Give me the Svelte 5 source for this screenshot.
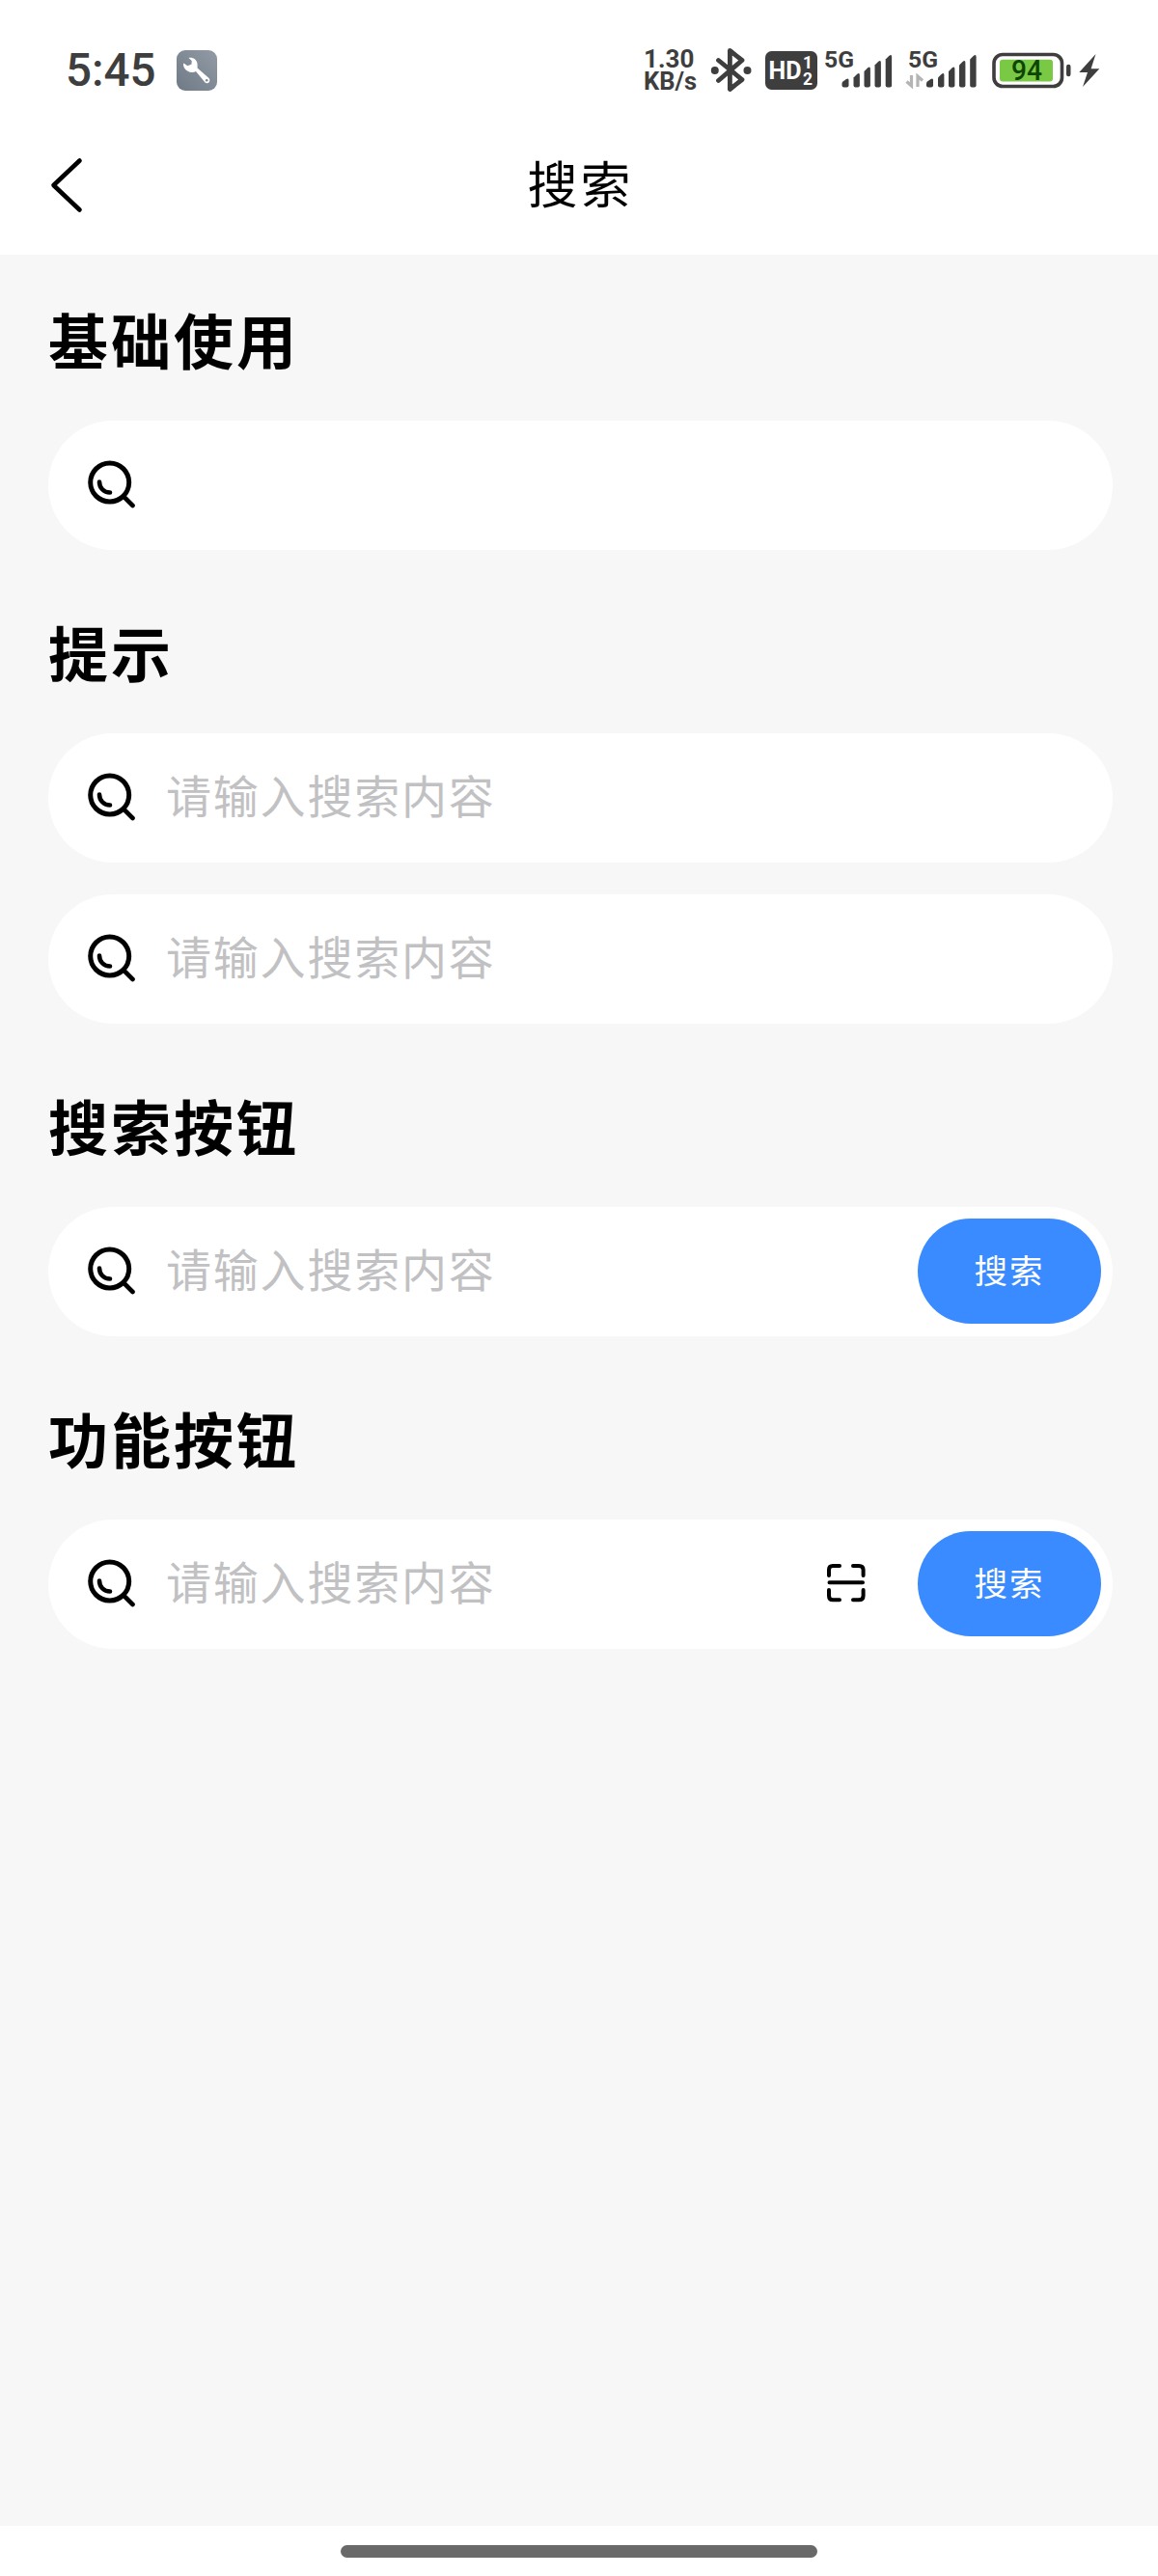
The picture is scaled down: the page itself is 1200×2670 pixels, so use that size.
<script lang="ts">
  interface SearchItem {
    value: string;
    placeholder?: string;
    button?: string;
    scan?: boolean;
  }

  interface Section {
    title: string;
    items: SearchItem[];
  }

  const hint = '请输入搜索内容';

  let sections = $state<Section[]>([
    { title: '基础使用', items: [{ value: '' }] },
    {
      title: '提示',
      items: [
        { value: '', placeholder: hint },
        { value: '', placeholder: hint },
      ],
    },
    { title: '搜索按钮', items: [{ value: '', placeholder: hint, button: '搜索' }] },
    { title: '功能按钮', items: [{ value: '', placeholder: hint, button: '搜索', scan: true }] },
  ]);
</script>

{#snippet signalBars()}
  <path d="M0 46.5V44.5Q0 43.5 1 42.5L4.5 40Q7 38.5 7 41V46.5Q7 48.5 5 48.5H2Q0 48.5 0 46.5Z" />
  <path d="M12 46.5V38.5L15.5 35Q18.4 32.5 18.4 36V46.5Q18.4 48.5 16.4 48.5H14Q12 48.5 12 46.5Z" />
  <path d="M23 46.5V32L26.5 28.5Q29.4 26 29.4 29.5V46.5Q29.4 48.5 27.4 48.5H25Q23 48.5 23 46.5Z" />
  <path d="M34 46.5V25.5L37.5 22Q40.4 19.5 40.4 23V46.5Q40.4 48.5 38.4 48.5H36Q34 48.5 34 46.5Z" />
  <path d="M45.2 46.5V19.5L48.7 16Q51.6 13.5 51.6 17V46.5Q51.6 48.5 49.6 48.5H47.2Q45.2 48.5 45.2 46.5Z" />
{/snippet}

<div class="page">
  <div class="status-bar">
    <span class="time">5:45</span>
    <svg class="tool" width="42" height="42" viewBox="0 0 42 42" aria-hidden="true">
      <defs>
        <linearGradient id="tool-bg" x1="0" y1="1" x2="1" y2="0">
          <stop offset="0" stop-color="#6f7a86" />
          <stop offset="1" stop-color="#929ba5" />
        </linearGradient>
      </defs>
      <rect width="42" height="42" rx="9" fill="url(#tool-bg)" />
      <path
        d="M12.500 8C16.500 7 20.500 9.500 21.300 13C21.700 15 21.700 17 21.500 18.500L33.500 29C36 32 32.500 36 29.500 33.500L20 22C16 24 10.500 22.500 8.200 18.700C7 16.800 6.700 14.800 7.300 13.500L11.500 16.300L15.500 14.500L15.700 11Z"
        fill="#fff"
      />
      <circle cx="31.200" cy="31.300" r="1.300" fill="#7e8894" />
    </svg>

    <div class="speed"><span>1.30</span><span class="unit">KB/s</span></div>
    <svg class="bluetooth" width="44" height="60" viewBox="0 0 44 60" aria-hidden="true">
      <path
        d="M8.500 20.500L33 40.500L20.400 50.500V10.500L33 20.500L8.500 41.500"
        fill="none"
        stroke="#3e3e3e"
        stroke-width="4.800"
        stroke-linecap="round"
        stroke-linejoin="round"
      />
      <circle cx="4.800" cy="31" r="4" fill="#3e3e3e" />
      <circle cx="38.500" cy="31" r="4" fill="#3e3e3e" />
    </svg>
    <svg class="hd" width="54" height="60" viewBox="0 0 54 60">
      <rect y="11" width="54" height="40" rx="6.500" fill="#3e3e3e" />
      <g fill="#fff" font-weight="700">
        <text x="3.500" y="40" font-size="25" textLength="34" lengthAdjust="spacingAndGlyphs">HD</text>
        <text x="39" y="28.500" font-size="17.500">1</text>
        <text x="39" y="46" font-size="17.500">2</text>
      </g>
    </svg>
    <svg class="signal" width="71" height="60" viewBox="0 0 71 60" fill="#3e3e3e">
      <text x="0" y="28.300" font-size="24" font-weight="700" textLength="31" lengthAdjust="spacingAndGlyphs">5G</text>
      <g transform="translate(18.500 0)">{@render signalBars()}</g>
    </svg>
    <svg class="signal-data" width="75" height="60" viewBox="0 0 75 60" fill="#3e3e3e">
      <text x="3" y="28.300" font-size="24" font-weight="700" textLength="31" lengthAdjust="spacingAndGlyphs">5G</text>
      <path
        d="M6.500 36V47L1.500 42.500M13 48V37L18 41.500"
        fill="none"
        stroke="#b4b4b4"
        stroke-width="3.200"
      />
      <g transform="translate(22 0)">{@render signalBars()}</g>
    </svg>
    <svg class="battery" width="82" height="60" viewBox="0 0 82 60">
      <rect x="2" y="14.500" width="70.500" height="33" rx="9" fill="#fff" stroke="#3e3e3e" stroke-width="3.600" />
      <rect x="8" y="19.700" width="55" height="22.800" rx="3" fill="#79c944" />
      <rect x="77" y="24.700" width="4.500" height="12.500" rx="2.200" fill="#3e3e3e" />
      <text x="20" y="41.300" font-size="29" font-weight="500" fill="#0f4503" textLength="32" lengthAdjust="spacingAndGlyphs">94</text>
    </svg>
    <svg class="bolt" width="22" height="60" viewBox="0 0 22 60" aria-hidden="true">
      <path d="M17.500 14L0.300 33H9L4 48L21.300 29.300H12.600Z" fill="#3e3e3e" />
    </svg>
  </div>

  <header class="nav-bar">
    <button class="back" type="button" aria-label="返回">
      <svg width="34" height="58" viewBox="0 0 34 58">
        <path
          d="M30.500 3.500L3.500 29L30.500 54.500"
          fill="none"
          stroke="#000"
          stroke-width="4.600"
          stroke-linecap="round"
          stroke-linejoin="round"
        />
      </svg>
    </button>
    <h1>搜索</h1>
  </header>

  <main class="content">
    {#each sections as section (section.title)}
      <section>
        <h2>{section.title}</h2>
        <div class="search-list">
          {#each section.items as item, idx (idx)}
            <div class="search">
              <svg class="search-icon" width="50" height="50" viewBox="0 0 50 50" aria-hidden="true">
                <g fill="none" stroke="#000" stroke-linecap="round">
                  <circle cx="22.700" cy="23" r="20" stroke-width="5" />
                  <path d="M37.500 38L46.500 47" stroke-width="4.600" />
                  <path d="M12 22.500C12 28.500 16.500 33.500 23 33.500" stroke-width="4.600" />
                </g>
              </svg>
              <input type="text" placeholder={item.placeholder} aria-label={section.title} bind:value={item.value} />
              {#if item.scan}
                <button class="scan" type="button" aria-label="扫一扫">
                  <svg width="40" height="40" viewBox="0 0 40 40">
                    <path
                      d="M2 12V6Q2 2 6 2H13M27 2H33Q37.600 2 37.600 6V12M2 27V33Q2 37.300 6 37.300H13M27 37.300H33Q37.600 37.300 37.600 33V27M2.500 19.300H37"
                      fill="none"
                      stroke="#000"
                      stroke-width="4"
                      stroke-linecap="round"
                    />
                  </svg>
                </button>
              {/if}
              {#if item.button}
                <button class="submit" type="button">{item.button}</button>
              {/if}
            </div>
          {/each}
        </div>
      </section>
    {/each}
  </main>

  <div class="gesture-bar"><span></span></div>
</div>

<style>
  :global(body) {
    background: #fff;
  }

  .page {
    display: flex;
    flex-direction: column;
    width: 1200px;
    height: 2670px;
    overflow: hidden;
    background: #fff;
    color: #000;
    font-family: 'Noto Sans CJK SC', sans-serif;
  }

  .page svg {
    display: block;
    flex: none;
  }

  .status-bar {
    display: flex;
    align-items: center;
    box-sizing: border-box;
    height: 144px;
    padding: 0 60px 0 68px;
    color: #3e3e3e;
    font-family: Roboto, sans-serif;
  }

  .time {
    width: 115px;
    padding-top: 2px;
    font-size: 47.5px;
    font-weight: 500;
    line-height: 60px;
  }

  .tool {
    margin: 2px auto 0 0;
  }

  .speed {
    display: flex;
    flex-direction: column;
    width: 69px;
    padding-top: 2px;
    font-size: 26px;
    font-weight: 700;
    line-height: 23px;
    white-space: nowrap;
  }

  .unit {
    font-size: 25.5px;
  }

  .bluetooth {
    margin-right: 13px;
  }

  .hd {
    margin-right: 7px;
  }

  .signal {
    margin-right: 13px;
  }

  .signal-data {
    margin-right: 15px;
  }

  .battery {
    margin-right: 8px;
  }

  .nav-bar {
    display: grid;
    grid-template-columns: 1fr auto 1fr;
    align-items: center;
    height: 96px;
    padding-bottom: 24px;
  }

  .back {
    justify-self: start;
    padding: 0 52px;
    border: none;
    background: none;
  }

  h1 {
    margin: 0 -3px 0 0;
    padding-bottom: 7px;
    font-size: 52px;
    font-weight: 400;
    line-height: 70px;
    letter-spacing: 3px;
  }

  .content {
    display: flex;
    flex: 1;
    flex-direction: column;
    gap: 70px;
    padding: 52px 47px 0 50px;
    background: #f7f7f7;
  }

  h2 {
    margin: 0 0 50px;
    font-size: 62px;
    font-weight: 700;
    line-height: 70px;
    letter-spacing: 3px;
  }

  .search-list {
    display: flex;
    flex-direction: column;
    gap: 33px;
  }

  .search {
    display: flex;
    align-items: center;
    box-sizing: border-box;
    height: 134px;
    padding: 0 12px 2px 41px;
    border-radius: 68px;
    background: #fff;
  }

  .search-icon {
    margin-right: 31px;
  }

  input {
    flex: 1;
    min-width: 0;
    padding: 0 0 6px;
    border: none;
    outline: none;
    background: none;
    font: inherit;
    font-size: 47px;
    line-height: 68px;
    letter-spacing: 1.8px;
  }

  input::placeholder {
    color: #c1c1c3;
    opacity: 1;
  }

  .scan {
    margin-right: 54px;
    padding: 0;
    border: none;
    background: none;
  }

  .submit {
    width: 190px;
    height: 109px;
    padding: 0 0 5px;
    border: none;
    border-radius: 55px;
    background: #3a8bff;
    color: #fff;
    font: inherit;
    font-size: 34.5px;
    letter-spacing: 2px;
  }

  .gesture-bar {
    display: flex;
    justify-content: center;
    box-sizing: border-box;
    height: 52px;
    padding-top: 20px;
    background: #fff;
  }

  .gesture-bar span {
    width: 494px;
    height: 13px;
    border-radius: 7px;
    background: #696969;
  }
</style>
